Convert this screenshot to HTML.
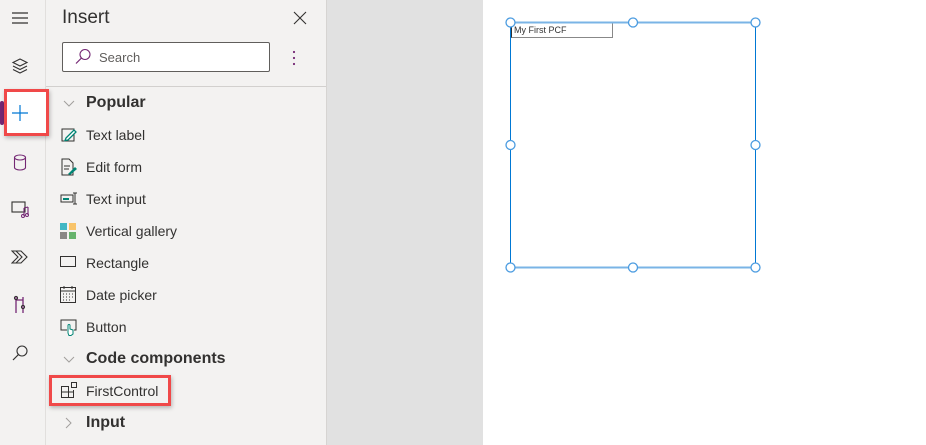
<!DOCTYPE html>
<html><head><meta charset="utf-8"><style>
*{margin:0;padding:0;box-sizing:border-box}
body{width:926px;height:445px;overflow:hidden;background:#fff;font-family:"Segoe UI","Liberation Sans",sans-serif;position:relative;color:#323130}
.rail{position:absolute;left:0;top:0;width:46px;height:445px;background:#f3f2f1;border-right:1px solid #e1dfdd}
.panel{position:absolute;left:46px;top:0;width:281px;height:445px;background:#f3f2f1;border-right:1px solid #d6d4d2}
.gray{position:absolute;left:327px;top:0;width:156px;height:445px;background:#e1e1e1}
.t{position:absolute;font-size:14px;color:#323130;white-space:nowrap}
.h{position:absolute;font-size:16px;font-weight:bold;color:#323130}
svg{position:absolute}
</style></head><body>
<div class="rail"></div>
<div class="panel"></div>
<div class="gray"></div>

<svg style="left:11px;top:11px" width="18" height="14"><path d="M1 2H17M1 7H17M1 12H17" stroke="#323130" stroke-width="1.2"/></svg>
<svg style="left:11px;top:57px" width="18" height="18"><path d="M9 2L16 5.5 9 9 2 5.5Z M2 9L9 12.5 16 9 M2 12.5L9 16 16 12.5" fill="none" stroke="#323130" stroke-width="1.1"/></svg>
<div style="position:absolute;left:0;top:101px;width:4px;height:24px;background:#742774;border-radius:2px"></div>
<div style="position:absolute;left:4px;top:89px;width:45px;height:47px;border:3px solid #f04949;background:#fff;box-shadow:1px 2px 4px rgba(0,0,0,.25)"></div>
<svg style="left:11px;top:104px" width="18" height="18"><path d="M9 1V17M1 9H17" stroke="#0078d4" stroke-width="1.2"/></svg>
<svg style="left:13px;top:154px" width="14" height="17"><ellipse cx="7" cy="3.5" rx="5.5" ry="2.5" fill="none" stroke="#742774" stroke-width="1.1"/><path d="M1.5 3.5V13.5A5.5 2.5 0 0 0 12.5 13.5V3.5" fill="none" stroke="#742774" stroke-width="1.1"/></svg>
<svg style="left:11px;top:200px" width="20" height="18"><rect x="1" y="2" width="13" height="10" fill="none" stroke="#323130" stroke-width="1.1"/><path d="M13 8V16M17 7V15M13 8L17 7" stroke="#742774" stroke-width="1.1" fill="none"/><circle cx="12" cy="16" r="1.5" fill="none" stroke="#742774"/><circle cx="16" cy="15" r="1.5" fill="none" stroke="#742774"/></svg>
<svg style="left:11px;top:249px" width="18" height="16"><path d="M1 2H10L16 8 10 14H1L7 8Z M5 2L11 8 5 14" fill="none" stroke="#323130" stroke-width="1.1"/></svg>
<svg style="left:13px;top:295px" width="14" height="20"><path d="M3 2V18M10 2V18M3 5H10" stroke="#742774" stroke-width="1.3" fill="none"/><circle cx="3" cy="3" r="1.6" fill="none" stroke="#323130"/><circle cx="10" cy="12" r="1.6" fill="none" stroke="#323130"/></svg>
<svg style="left:11px;top:344px" width="18" height="18"><circle cx="11" cy="7" r="5" fill="none" stroke="#323130" stroke-width="1.1"/><path d="M7.5 10.5L2 16" stroke="#323130" stroke-width="1.2"/></svg>

<div style="position:absolute;left:62px;top:7px;font-size:19px;color:#323130">Insert</div>
<svg style="left:293px;top:11px" width="14" height="14"><path d="M1 1L13 13M13 1L1 13" stroke="#323130" stroke-width="1.1"/></svg>
<div style="position:absolute;left:62px;top:42px;width:208px;height:30px;border:1px solid #605e5c;border-radius:2px;background:#fff"></div>
<svg style="left:74px;top:48px" width="18" height="18"><circle cx="11" cy="6.5" r="5" fill="none" stroke="#742774" stroke-width="1.1"/><path d="M7.5 10L2 15.5" stroke="#742774" stroke-width="1.2"/></svg>
<div class="t" style="left:99px;top:50px;font-size:13px;color:#605e5c">Search</div>
<svg style="left:291px;top:49px" width="6" height="18"><circle cx="3" cy="3" r="1.1" fill="#742774"/><circle cx="3" cy="9" r="1.1" fill="#742774"/><circle cx="3" cy="15" r="1.1" fill="#742774"/></svg>
<div style="position:absolute;left:46px;top:86px;width:280px;height:1px;background:#d2d0ce"></div>

<svg style="left:63px;top:100px" width="12" height="8"><path d="M1 1L6 6 11 1" fill="none" stroke="#a19f9d"/></svg>
<div class="h" style="left:86px;top:94px">Popular</div>

<svg style="left:61px;top:127px" width="16" height="16"><rect x="1" y="2" width="12" height="12" fill="none" stroke="#323130"/><path d="M5 11L13 3 15 5 7 13 4 13.5Z" fill="#fff" stroke="#008575" stroke-width="1.3"/></svg>
<div class="t" style="left:86px;top:127px">Text label</div>
<svg style="left:61px;top:158px" width="16" height="18"><path d="M1 1H8L12 5V17H1Z" fill="none" stroke="#323130"/><path d="M3 8H9M3 11H8" stroke="#323130"/><path d="M7 16L14 9 16 11 9 17Z" fill="#008575"/></svg>
<div class="t" style="left:86px;top:159px">Edit form</div>
<svg style="left:60px;top:192px" width="18" height="14"><rect x="1" y="3" width="12" height="7" fill="none" stroke="#323130"/><rect x="3" y="6" width="6" height="2" fill="#008575"/><path d="M13 1H17M15 1V12M13 12H17" stroke="#323130"/></svg>
<div class="t" style="left:86px;top:191px">Text input</div>
<svg style="left:60px;top:223px" width="16" height="16"><rect x="0" y="0" width="7" height="7" fill="#41b7c4"/><rect x="9" y="0" width="7" height="7" fill="#f8c46a"/><rect x="0" y="9" width="7" height="7" fill="#8a8886"/><rect x="9" y="9" width="7" height="7" fill="#66b36c"/></svg>
<div class="t" style="left:86px;top:223px">Vertical gallery</div>
<svg style="left:60px;top:256px" width="16" height="12"><rect x="0.5" y="0.5" width="15" height="10" fill="none" stroke="#323130"/></svg>
<div class="t" style="left:86px;top:255px">Rectangle</div>
<svg style="left:60px;top:286px" width="16" height="17"><rect x="0.5" y="1.5" width="15" height="15" fill="none" stroke="#323130"/><path d="M0.5 5H15.5" stroke="#323130"/><path d="M4 0V3M12 0V3" stroke="#323130"/><path d="M3 8h1M6 8h1M9 8h1M12 8h1M3 11h1M6 11h1M9 11h1M12 11h1M3 14h1M6 14h1M9 14h1" stroke="#323130"/></svg>
<div class="t" style="left:86px;top:287px">Date picker</div>
<svg style="left:60px;top:319px" width="17" height="17"><path d="M7 11H1V1H16V11H14" fill="none" stroke="#323130"/><path d="M8 14V6.5A1 1 0 0 1 10 6.5V10L13 11V15L11 16.5H9Z" fill="#fff" stroke="#008575"/></svg>
<div class="t" style="left:86px;top:319px">Button</div>

<svg style="left:63px;top:356px" width="12" height="8"><path d="M1 1L6 6 11 1" fill="none" stroke="#a19f9d"/></svg>
<div class="h" style="left:86px;top:350px">Code components</div>

<div style="position:absolute;left:49px;top:375px;width:122px;height:31px;border:3px solid #f04949;box-shadow:1px 2px 4px rgba(0,0,0,.25)"></div>
<svg style="left:61px;top:382px" width="16" height="16"><path d="M0.5 4.5H7.5V15.5H0.5ZM0.5 10H12.5M7.5 10V15.5H12.5V8" fill="none" stroke="#323130"/><rect x="10.5" y="0.5" width="5" height="5" fill="none" stroke="#323130"/></svg>
<div class="t" style="left:86px;top:383px">FirstControl</div>

<svg style="left:65px;top:417px" width="8" height="12"><path d="M1 1L6 6 1 11" fill="none" stroke="#a19f9d"/></svg>
<div class="h" style="left:86px;top:414px">Input</div>

<div style="position:absolute;left:511px;top:22px;width:102px;height:16px;border:1px solid #888;border-top-color:#333;border-left-color:#333;background:#fff;font-size:9px;line-height:14px;padding-left:2px;color:#333">My First PCF</div>
<svg style="left:500px;top:12px" width="270" height="266">
<rect x="10.5" y="10.5" width="245" height="245" fill="none" stroke="#0078d4" stroke-width="1"/>
<path d="M10.5 10.5H255.5M10.5 255.5H255.5" stroke="#7ab4e6" stroke-width="2"/>
<g fill="#fff" stroke="#4a9be0" stroke-width="1.3">
<circle cx="10.5" cy="10.5" r="4.5"/><circle cx="133" cy="10.5" r="4.5"/><circle cx="255.5" cy="10.5" r="4.5"/>
<circle cx="10.5" cy="133" r="4.5"/><circle cx="255.5" cy="133" r="4.5"/>
<circle cx="10.5" cy="255.5" r="4.5"/><circle cx="133" cy="255.5" r="4.5"/><circle cx="255.5" cy="255.5" r="4.5"/>
</g></svg>
</body></html>
